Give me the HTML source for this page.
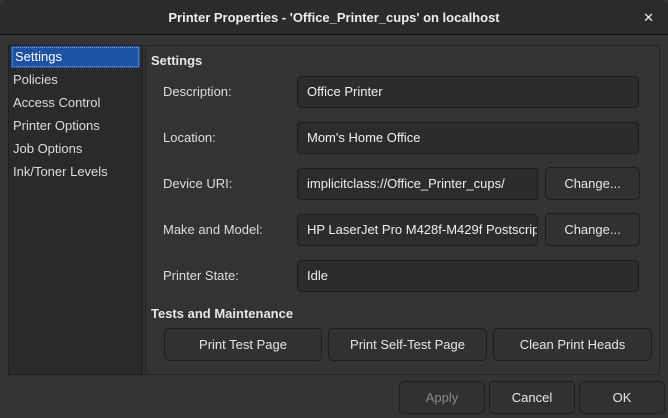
<!DOCTYPE html>
<html><head><style>
*{box-sizing:border-box;margin:0;padding:0}
body{width:668px;height:418px;background:#333;font-family:"Liberation Sans",sans-serif;font-size:13px;color:#ddd;position:relative;overflow:hidden}
.a{position:absolute}
.title{left:0;top:0;width:668px;height:35px;background:#2b2b2b;border-bottom:1px solid #111;border-radius:8px 8px 0 0;text-align:center;line-height:35px;font-weight:bold;color:#eee}
.x{right:14px;top:0;line-height:35px;font-size:13px;color:#eee}
.list{left:8px;top:45px;width:135px;height:330px;background:#2a2a2a;border:1px solid #202020}
.list div{height:23px;line-height:23px;padding-left:4px}
.sel{background:#1d52a3;color:#fff;margin:0 2px 0 2px;height:22px!important;line-height:22px!important;outline:1px dotted #7a9fd8;outline-offset:-2px}
.panel{left:145px;top:45px;width:515px;height:330px;border:1px solid #222}
.h{font-weight:bold;color:#e6e6e6}
.lbl{left:163px}
.in{height:32px;background:#2c2c2c;border:1px solid #1e1e1e;border-radius:4px;line-height:30px;padding-left:9px;color:#eee;overflow:hidden;white-space:nowrap}
.btn{height:33px;background:#313131;border:1px solid #1e1e1e;border-radius:5px;text-align:center;line-height:31px;color:#e6e6e6}
</style></head><body>
<div class="a title">Printer Properties - 'Office_Printer_cups' on localhost</div>
<div class="a x">✕</div>
<div class="a list">
<div class="sel">Settings</div><div>Policies</div><div>Access Control</div><div>Printer Options</div><div>Job Options</div><div>Ink/Toner Levels</div>
</div>
<div class="a panel"></div>
<div class="a h" style="left:151px;top:53px">Settings</div>
<div class="a lbl" style="top:84px">Description:</div>
<div class="a in" style="left:297px;top:76px;width:342px">Office Printer</div>
<div class="a lbl" style="top:130px">Location:</div>
<div class="a in" style="left:297px;top:122px;width:342px">Mom's Home Office</div>
<div class="a lbl" style="top:176px">Device URI:</div>
<div class="a in" style="left:297px;top:168px;width:241px">implicitclass://Office_Printer_cups/</div>
<div class="a btn" style="left:545px;top:167px;width:95px">Change...</div>
<div class="a lbl" style="top:222px">Make and Model:</div>
<div class="a in" style="left:297px;top:214px;width:241px">HP LaserJet Pro M428f-M429f Postscript</div>
<div class="a btn" style="left:545px;top:213px;width:95px">Change...</div>
<div class="a lbl" style="top:268px">Printer State:</div>
<div class="a in" style="left:297px;top:260px;width:342px">Idle</div>
<div class="a h" style="left:151px;top:306px">Tests and Maintenance</div>
<div class="a btn" style="left:164px;top:328px;width:158px">Print Test Page</div>
<div class="a btn" style="left:328px;top:328px;width:159px">Print Self-Test Page</div>
<div class="a btn" style="left:493px;top:328px;width:159px">Clean Print Heads</div>
<div class="a btn" style="left:399px;top:381px;width:86px;color:#888">Apply</div>
<div class="a btn" style="left:489px;top:381px;width:86px">Cancel</div>
<div class="a btn" style="left:579px;top:381px;width:86px">OK</div>
</body></html>
